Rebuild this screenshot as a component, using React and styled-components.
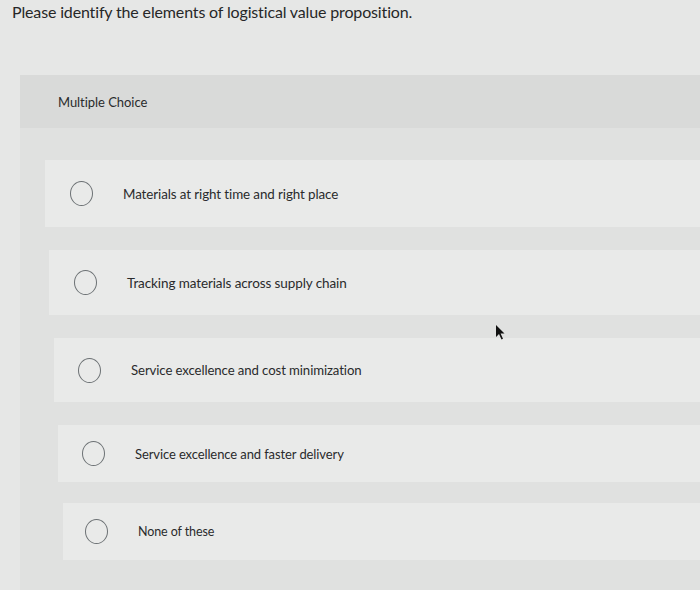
import React from "react";
import styled, { createGlobalStyle } from "styled-components";

const Global = createGlobalStyle`
  html, body { margin: 0; padding: 0; }
  body {
    background: #e6e7e6;
    font-family: "Lato", "Open Sans", sans-serif;
    color: #2c2d2e;
    overflow: hidden;
  }
`;

const Page = styled.div`
  position: relative;
  width: 700px;
  height: 590px;
  overflow: hidden;
  background: #e6e7e6;
`;

const Title = styled.h1`
  margin: 0;
  padding: 2px 0 0 12px;
  font-size: 16px;
  font-weight: 400;
  line-height: 20px;
  letter-spacing: -0.15px;
  color: #262728;
`;

const Panel = styled.section`
  margin: 53px 0 0 20px;
  display: flex;
  flex-direction: column;
`;

const Header = styled.div`
  height: 53px;
  display: flex;
  align-items: center;
  padding-left: 38px;
  background: #d9dad9;
  font-size: 13px;
  color: #2a2b2c;
  letter-spacing: -0.05px;
`;

const Body = styled.div`
  background: #e0e1e0;
  padding-top: 32px;
  padding-bottom: 40px;
  display: flex;
  flex-direction: column;
`;

const Option = styled.label`
  display: flex;
  align-items: center;
  gap: 30px;
  height: ${(p) => p.$height}px;
  margin-top: ${(p) => p.$gap}px;
  margin-left: ${(p) => p.$indent}px;
  padding-left: ${(p) => p.$pad}px;
  background: #e9eae9;
  font-size: ${(p) => p.$size}px;
  color: #2a2b2c;
  letter-spacing: -0.1px;
  cursor: pointer;
`;

const Ring = styled.span`
  flex: none;
  width: 23px;
  height: 25px;
  border: 1.6px solid #6c7174;
  border-radius: 50%;
  box-sizing: border-box;
`;

const Cursor = styled.svg`
  position: absolute;
  left: 495px;
  top: 324px;
  width: 10px;
  height: 17px;
  filter: blur(0.4px);
`;

const options = [
  { text: "Materials at right time and right place", gap: 0, height: 67, indent: 25, pad: 25, size: 13.4 },
  { text: "Tracking materials across supply chain", gap: 23, height: 65, indent: 29, pad: 25, size: 13.5 },
  { text: "Service excellence and cost minimization", gap: 23, height: 64, indent: 34, pad: 24, size: 13.2 },
  { text: "Service excellence and faster delivery", gap: 23, height: 57, indent: 38, pad: 24, size: 13 },
  { text: "None of these", gap: 21, height: 57, indent: 43, pad: 22, size: 12.5 },
];

export default function App() {
  return (
    <Page>
      <Global />
      <Title>Please identify the elements of logistical value proposition.</Title>
      <Panel>
        <Header>Multiple Choice</Header>
        <Body>
          {options.map((o) => (
            <Option
              key={o.text}
              $gap={o.gap}
              $height={o.height}
              $indent={o.indent}
              $pad={o.pad}
              $size={o.size}
            >
              <Ring />
              <span>{o.text}</span>
            </Option>
          ))}
        </Body>
      </Panel>
      <Cursor viewBox="0 0 10 17">
        <path d="M1 1 L1 13 L4 10 L6.5 15.5 L8 14.8 L5.6 9.4 L9.5 9.4 Z" fill="#111" />
      </Cursor>
    </Page>
  );
}
